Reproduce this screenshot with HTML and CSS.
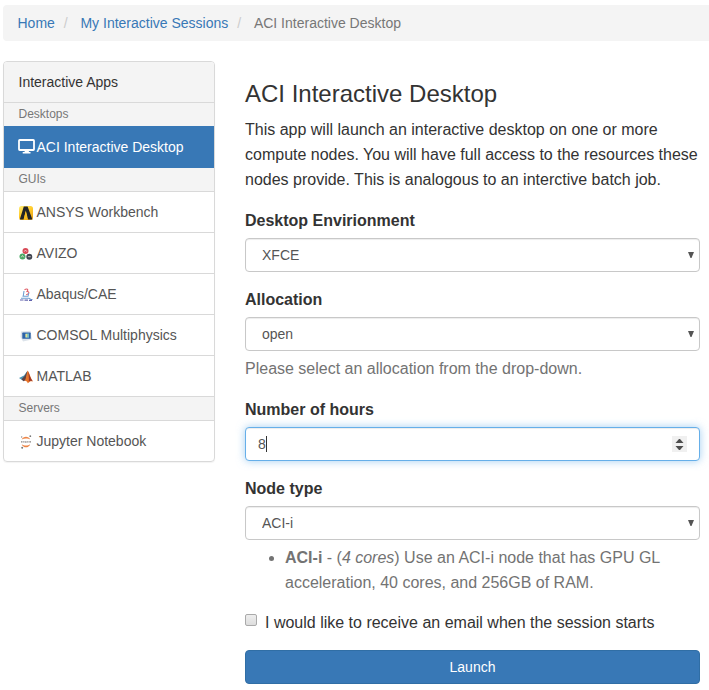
FILE: index.html
```
<!DOCTYPE html>
<html lang="en">
<head>
<meta charset="utf-8">
<title>ACI Interactive Desktop</title>
<link rel="stylesheet" href="styles.css">
</head>
<body>
<nav class="breadcrumb"><a href="#">Home</a><span class="sep">/</span><a href="#">My Interactive Sessions</a><span class="sep">/</span><span class="current">ACI Interactive Desktop</span></nav>
<div class="layout">
  <aside class="sidebar">
    <div class="heading">Interactive Apps</div>
    <div class="group">Desktops</div>
    <a class="app active" href="#"><svg class="monitor" width="18" height="16" viewBox="0 0 18 16"><rect x="1" y="1" width="15" height="10" rx=".7" fill="none" stroke="#fff" stroke-width="1.8"/><path d="M7 11h3.500l.5 2h1.500v1.500H4.700V13h1.800z" fill="#fff"/></svg>ACI Interactive Desktop</a>
    <div class="group ruled">GUIs</div>
    <a class="app" href="#"><svg class="icon" width="14" height="14" viewBox="0 0 14 14"><defs><linearGradient id="gold" x1="0" y1="0" x2="0.6" y2="1"><stop stop-color="#ffed79"/><stop offset=".55" stop-color="#ffc928"/><stop offset="1" stop-color="#eaa71c"/></linearGradient></defs><rect width="14" height="14" rx="2.500" fill="url(#gold)"/><path d="M4.800.5h3.800L13.400 13.500H9.200L6.700 5.500 4.600 13.500H.8z" fill="#232426"/><path d="M6.800 4.500 8.200 10 7.500 13.500H4.700z" fill="#f8bd20"/></svg>ANSYS Workbench</a>
    <a class="app" href="#"><svg class="icon" width="14" height="14" viewBox="0 0 14 14"><circle cx="6.500" cy="4" r="3" fill="#d94b58"/><circle cx="3.500" cy="9.500" r="3" fill="#49a764"/><circle cx="10.300" cy="9.700" r="3" fill="#414652"/><path d="M5.200 4.700 6.500 3l1.300 1.700M2.200 10.300l1.300-1.800 1.300 1.800M8.900 9.700h2.800" fill="none" stroke="#f0dedd" stroke-width=".8"/></svg>AVIZO</a>
    <a class="app" href="#"><svg class="icon" width="14" height="14" viewBox="0 0 14 14"><path d="M5.500 1.800C8 .2 9.800 1.400 8 3.500c3-.2 1.900 3-.9 3.200" fill="none" stroke="#e0606a" stroke-width="1.100"/><path d="M5 3 4.300 7.800M9.800 5 9 8.500M3.500 8.300h6M2 10.200h8l2 1.300h1.500" fill="none" stroke="#6e9ed2" stroke-width="1.100"/><path d="M1 12h3.500M5.500 12.200h3.500M10 12.300h3" stroke="#6263ad" stroke-width="1.200"/></svg>Abaqus/CAE</a>
    <a class="app" href="#"><svg class="icon" width="14" height="14" viewBox="0 0 14 14"><path d="M2 2.500 11.500 1.800 13 10.500 4 12.500 1.500 8z" fill="#dce3ea"/><rect x="3.300" y="3.600" width="8.400" height="6.200" rx=".6" fill="#2c62a8"/><path d="M6.500 4.500h3.500v4.300H6.500z" fill="#75bdc6"/><path d="M6.500 5h1.700v3.300H6.500z" fill="#e4dc8e"/></svg>COMSOL Multiphysics</a>
    <a class="app" href="#"><svg class="icon" width="14" height="14" viewBox="0 0 14 14"><path d="M0 8 5 5.600 8.500.7 7.600 8 4.200 10.800z" fill="#4c94b4"/><path d="M2.500 9.300 5.700 6 8.500.7 7 10 4.600 11.200z" fill="#614141"/><path d="M8.500.6c1.800 1.400 2.700 7 5.500 11-2-.8-3.100-.4-5.200 1.700-.6-1.900-1.500-2.700-3-2.600C7.300 8.200 7.600 3.800 8.500.6z" fill="#e8752a"/><path d="M9 1.500c1.600 2.600 2 6.700 4.700 9.800-1.900-.7-2.700-.6-3.900.1C10.200 8 9.600 4.500 9 1.500z" fill="#9a382b"/></svg>MATLAB</a>
    <div class="group ruled">Servers</div>
    <a class="app" href="#"><svg class="icon" width="14" height="14" viewBox="0 0 14 14"><path d="M2.700 4.600C4.200.9 9.800.9 11.200 4.600 9 3.200 5 3.200 2.700 4.600zM2.700 9.200c1.600 4.200 7 4.200 8.500 0-2.200 1.700-6.300 1.700-8.500 0z" fill="#ed8547"/><path d="M2 6.800h1.500M4.200 6.800h1.300M6.200 7h1.300M8.200 6.800h1.300M10.300 6.800h1.700" stroke="#85817f" stroke-width="1.300"/><circle cx="11.300" cy="1.200" r=".9" fill="#777"/><circle cx="2.700" cy="2" r=".7" fill="#888"/><circle cx="3.200" cy="12.700" r="1" fill="#777"/></svg>Jupyter Notebook</a>
  </aside>
  <main class="content">
    <h1>ACI Interactive Desktop</h1>
    <p class="intro">This app will launch an interactive desktop on one or more compute nodes. You will have full access to the resources these nodes provide. This is analogous to an interctive batch job.</p>
    <div class="field">
      <label for="desktop">Desktop Envirionment</label>
      <div class="select"><select id="desktop"><option>XFCE</option></select><svg class="arrow" width="6" height="6" viewBox="0 0 6 6"><path d="M0 0h6L3.500 6h-1z" fill="#555"/></svg></div>
    </div>
    <div class="field with-help">
      <label for="allocation">Allocation</label>
      <div class="select"><select id="allocation"><option>open</option></select><svg class="arrow" width="6" height="6" viewBox="0 0 6 6"><path d="M0 0h6L3.500 6h-1z" fill="#555"/></svg></div>
      <p class="help">Please select an allocation from the drop-down.</p>
    </div>
    <div class="field">
      <label>Number of hours</label>
      <div class="number"><span class="value">8</span><span class="caret"></span><svg class="spinner" width="15" height="16" viewBox="0 0 15 16"><path d="M0 0h15v16H0z" fill="#f0f0f0"/><path d="M7 3h1l3.500 4h-8zM3.500 10h8L8 14H7z" fill="#4d4d4d"/></svg></div>
    </div>
    <div class="field with-help">
      <label for="node">Node type</label>
      <div class="select"><select id="node"><option>ACI-i</option></select><svg class="arrow" width="6" height="6" viewBox="0 0 6 6"><path d="M0 0h6L3.500 6h-1z" fill="#555"/></svg></div>
      <ul class="help"><li><strong>ACI-i</strong> - (<em>4 cores</em>) Use an ACI-i node that has GPU GL acceleration, 40 cores, and 256GB of RAM.</li></ul>
    </div>
    <label class="check"><input type="checkbox"><span>I would like to receive an email when the session starts</span></label>
    <button class="launch">Launch</button>
  </main>
</div>
</body>
</html>
```
FILE: styles.css
```
* { box-sizing: border-box; }
body { margin: 0; padding: 5px 0 0 3px; overflow: hidden; background: #fff; color: #333; font: 14px/20px "Liberation Sans", Arial, sans-serif; }
a { color: #3878b6; text-decoration: none; }
.breadcrumb { height: 36px; padding: 8px 14.5px; background: #f4f4f4; border-radius: 4px 0 0 4px; white-space: nowrap; }
.breadcrumb .sep { display: inline-block; width: 25.6px; padding-left: 9px; color: #ccc; }
.breadcrumb .current { color: #777; }
.layout { display: flex; align-items: flex-start; gap: 30px; margin-top: 20px; }
.sidebar { width: 212px; flex: none; border: 1px solid #d9d9d9; border-radius: 4px; overflow: hidden; box-shadow: 0 1px 1px rgba(0,0,0,.05); }
.heading { height: 41px; padding: 10px 14.5px; background: #f4f4f4; border-bottom: 1px solid #d9d9d9; }
.group { height: 23px; padding: 1px 14.5px; background: #f4f4f4; color: #777; font-size: 12px; }
.group.ruled { height: 24px; border-bottom: 1px solid #d9d9d9; }
.app { display: flex; align-items: center; height: 41px; padding: 0 15px; color: #555; border-bottom: 1px solid #d9d9d9; }
.app:last-child { height: 40px; border-bottom: 0; }
.app.active { height: 42px; padding-left: 14px; background: #3878b6; color: #fff; border: 0; }
.icon { margin-right: 3.5px; position: relative; top: 1px; }
.monitor { margin-right: .5px; }
.content { width: 455px; }
h1 { margin: 20px 0 10px; font-size: 24px; line-height: 26px; font-weight: 500; }
.intro { width: 458px; margin: 0 0 16px; font-size: 16px; line-height: 25px; }
.field { margin-bottom: 15px; font-size: 16px; line-height: 25px; }
.field.with-help { margin-bottom: 16px; }
.field label { display: block; margin-bottom: 5px; font-weight: bold; }
.select { position: relative; height: 34px; }
.select select, .number { width: 100%; height: 34px; border: 1px solid #c8c8c8; border-radius: 4px; background: #fff; color: #555; font: 14px/20px "Liberation Sans", Arial, sans-serif; box-shadow: inset 0 1px 1px rgba(0,0,0,.075); }
.select select { appearance: none; padding: 6px 12px 6px 16px; display: block; }
.arrow { position: absolute; right: 6px; top: 14px; }
.number { display: flex; align-items: center; padding: 0 12px; border-color: #66afe9; box-shadow: inset 0 1px 1px rgba(0,0,0,.075), 0 0 8px rgba(102,175,233,.6); }
.caret { width: 1px; height: 16px; background: #333; }
.spinner { margin-left: auto; }
.help { margin: 5px 0 0; color: #737373; }
ul.help { padding-left: 40px; width: 450px; }
.check { display: flex; gap: 8px; height: 25px; margin: -1px 0 15px; font-size: 16px; line-height: 25px; white-space: nowrap; }
.check input { appearance: none; width: 12px; height: 12px; margin: 4px 0 0; border: 1px solid #aaa; border-radius: 2px; background: linear-gradient(#eee, #ddd); }
.launch { display: block; width: 100%; height: 34px; padding: 6px 12px; border: 1px solid #306ea5; border-radius: 4px; background: #3878b6; color: #fff; font: 14px/20px "Liberation Sans", Arial, sans-serif; }
```
